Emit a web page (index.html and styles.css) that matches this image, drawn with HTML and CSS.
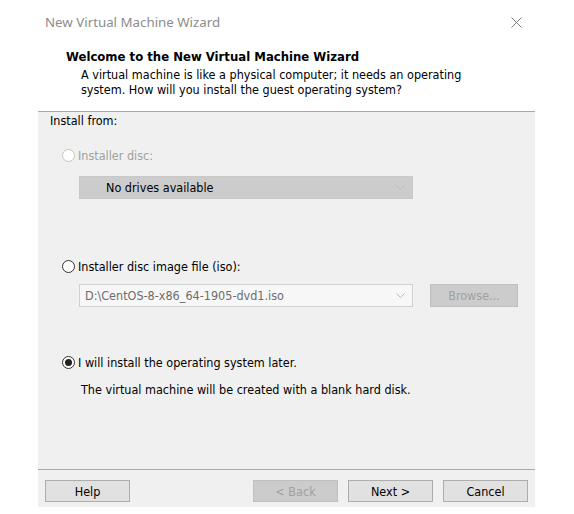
FILE: index.html
```html
<!DOCTYPE html>
<html>
<head>
<meta charset="utf-8">
<link rel="stylesheet" href="styles.css">
</head>
<body>
<div class="frame">
  <div class="titlebar">
    <span class="title">New Virtual Machine Wizard</span>
    <svg class="close" width="11" height="11" viewBox="0 0 11 11"><path d="M0.5 0.5 L10.5 10.5 M10.5 0.5 L0.5 10.5" stroke="#7a7a7a" stroke-width="1" fill="none"/></svg>
  </div>
  <div class="header">
    <div class="heading">Welcome to the New Virtual Machine Wizard</div>
    <div class="desc">A virtual machine is like a physical computer; it needs an operating<br>system. How will you install the guest operating system?</div>
  </div>
  <div class="panel">
    <div class="content">
      <div class="label">Install from:</div>
      <div class="radio-row disabled first">
        <span class="radio"></span><span>Installer disc:</span>
      </div>
      <div class="select disabled-select">
        <span class="select-text">No drives available</span>
        <svg class="chev" width="9" height="5" viewBox="0 0 9 5"><path d="M0.5 0.5 L4.5 4.5 L8.5 0.5" stroke="#b8b8b8" fill="none"/></svg>
      </div>
      <div class="radio-row second">
        <span class="radio"></span><span>Installer disc image file (iso):</span>
      </div>
      <div class="combo-row">
        <div class="combo">
          <span class="combo-text">D:\CentOS-8-x86_64-1905-dvd1.iso</span>
          <svg class="chev" width="9" height="5" viewBox="0 0 9 5"><path d="M0.5 0.5 L4.5 4.5 L8.5 0.5" stroke="#b8b8b8" fill="none"/></svg>
        </div>
        <div class="btn btn-disabled browse">Browse...</div>
      </div>
      <div class="radio-row third">
        <span class="radio checked"></span><span>I will install the operating system later.</span>
      </div>
      <div class="note">The virtual machine will be created with a blank hard disk.</div>
    </div>
    <div class="footer">
      <div class="btn">Help</div>
      <div class="right-btns">
        <div class="btn btn-disabled">&lt; Back</div>
        <div class="btn">Next &gt;</div>
        <div class="btn">Cancel</div>
      </div>
    </div>
  </div>
</div>
</body>
</html>
```

FILE: styles.css
```css
html, body {
  margin: 0;
  padding: 0;
  background: #ffffff;
}
body {
  width: 574px;
  height: 514px;
  overflow: hidden;
  font-family: "DejaVu Sans", "Liberation Sans", sans-serif;
  font-stretch: condensed;
  font-size: 12.5px;
  color: #000;
}
.frame {
  padding: 0 39px 0 38px;
}
.titlebar {
  height: 44px;
  display: flex;
  align-items: center;
  justify-content: space-between;
  padding: 0 13px 0 7px;
}
.title {
  font-family: "Noto Sans", "Open Sans", sans-serif;
  font-stretch: normal;
  font-size: 13.3px;
  color: #8c8c8c;
}
.close {
  display: block;
}
.header {
  height: 67px;
  padding-left: 28px;
}
.heading {
  font-weight: bold;
  font-size: 13px;
  line-height: 16px;
  padding-top: 5px;
  color: #000;
}
.desc {
  padding-left: 15px;
  line-height: 15px;
  margin-top: 2px;
}
.panel {
  background: #f0f0f0;
  border-top: 1px solid #a8a8a8;
  height: 395px;
  display: flex;
  flex-direction: column;
}
.content {
  padding: 1px 0 0 12px;
  flex: 1;
}
.label {
  line-height: 16px;
}
.radio-row {
  display: flex;
  align-items: center;
  height: 16px;
  margin-left: 12px;
}
.radio-row.first { margin-top: 18px; }
.radio-row.second { margin-top: 59px; }
.radio-row.third { margin-top: 47px; }
.radio-row.disabled { color: #a0a0a0; }
.radio {
  box-sizing: border-box;
  width: 13px;
  height: 13px;
  border-radius: 50%;
  border: 1px solid #333;
  background: #fff;
  margin-right: 3px;
  display: flex;
  align-items: center;
  justify-content: center;
}
.disabled .radio {
  border-color: #c4c4c4;
}
.radio.checked::after {
  content: "";
  width: 7px;
  height: 7px;
  border-radius: 50%;
  background: #222;
}
.select {
  box-sizing: border-box;
  width: 334px;
  height: 23px;
  margin: 13px 0 0 29px;
  display: flex;
  align-items: center;
  justify-content: space-between;
  padding: 0 7px 0 26px;
}
.disabled-select {
  background: #cccccc;
  border: 1px solid #c8c8c8;
  color: #000;
}
.chev {
  display: block;
}
.combo-row {
  display: flex;
  margin: 10px 0 0 29px;
  gap: 17px;
}
.combo {
  box-sizing: border-box;
  width: 334px;
  height: 23px;
  border: 1px solid #d0d0d0;
  background: #f7f7f7;
  display: flex;
  align-items: center;
  justify-content: space-between;
  padding: 0 7px 0 5px;
}
.combo-text {
  color: #6d6d6d;
}
.note {
  margin: 12px 0 0 31px;
  line-height: 16px;
}
.footer {
  border-top: 1px solid #a8a8a8;
  height: 38px;
  box-sizing: border-box;
  padding: 10px 7px 0 7px;
  display: flex;
  justify-content: space-between;
}
.right-btns {
  display: flex;
  gap: 10px;
}
.btn {
  box-sizing: border-box;
  width: 85px;
  height: 22px;
  border: 1px solid #adadad;
  background: #e1e1e1;
  display: flex;
  align-items: center;
  justify-content: center;
  color: #000;
}
.btn-disabled {
  background: #cccccc;
  border-color: #bfbfbf;
  color: #a0a0a0;
}
.browse {
  width: 88px;
  height: 23px;
}
```
